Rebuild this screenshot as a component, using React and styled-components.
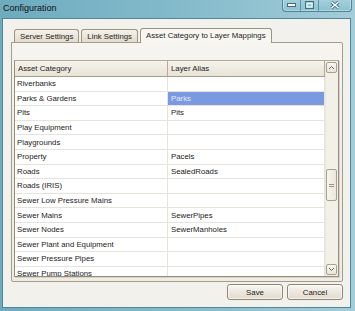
import React from "react";
import styled, { createGlobalStyle } from "styled-components";

const GlobalStyle = createGlobalStyle`
    *, *::before, *::after {
        box-sizing: border-box;
    }
    html, body {
        margin: 0;
        padding: 0;
        background: #7ab3c5;
    }
    body {
        font-family: "Liberation Sans", Arial, sans-serif;
        font-size: 7.8px;
        color: #1b1b1b;
    }
`;

const rows = [
    ["Riverbanks", ""],
    ["Parks & Gardens", "Parks", true],
    ["Pits", "Pits"],
    ["Play Equipment", ""],
    ["Playgrounds", ""],
    ["Property", "Pacels"],
    ["Roads", "SealedRoads"],
    ["Roads (IRIS)", ""],
    ["Sewer Low Pressure Mains", ""],
    ["Sewer Mains", "SewerPipes"],
    ["Sewer Nodes", "SewerManholes"],
    ["Sewer Plant and Equipment", ""],
    ["Sewer Pressure Pipes", ""],
    ["Sewer Pump Stations", ""],
];

const Window = styled.div`
    width: 355px;
    height: 311px;
    display: flex;
    flex-direction: column;
    background: linear-gradient(to right, #6eabbf 0%, #86bccc 55%, #a3cdd8 100%);
    overflow: hidden;
`;

const TitleBar = styled.div`
    height: 18px;
    flex-shrink: 0;
    display: flex;
    align-items: flex-start;
    padding-left: 3px;
`;

const Title = styled.div`
    font-size: 9px;
    line-height: 14px;
    color: #111;
    margin-top: 1px;
`;

const CaptionGroup = styled.div`
    margin-left: auto;
    margin-right: 3px;
    display: flex;
    height: 13px;
    margin-top: -1px;
    border: 1px solid #4f8597;
    border-top: none;
    border-radius: 0 0 4px 4px;
    background: linear-gradient(#a7d0dc, #8cc0cf);
    box-shadow: inset 0 0 0 1px rgba(255, 255, 255, 0.35);
    overflow: hidden;
`;

const CaptionButton = styled.div`
    width: ${p => p.$w}px;
    display: flex;
    align-items: center;
    justify-content: center;
    border-left: ${p => (p.$first ? "none" : "1px solid #5d93a5")};
`;

const Client = styled.div`
    flex: 1;
    margin: 0 4px 3px 2px;
    border: 1px solid #4d8799;
    background: #f3f1ec;
    display: flex;
    flex-direction: column;
    padding: 9px 7px 7px 8px;
`;

const TabStrip = styled.div`
    display: flex;
    align-items: flex-end;
    gap: 2px;
    height: 14px;
    flex-shrink: 0;
    padding-left: 3px;
    position: relative;
    z-index: 1;
`;

const Tab = styled.div`
    height: ${p => (p.$active ? 15 : 13)}px;
    margin-bottom: ${p => (p.$active ? -1 : 0)}px;
    padding: 0 5px ${p => (p.$active ? 1 : 0)}px;
    display: flex;
    align-items: center;
    border: 1px solid #9c9484;
    border-bottom: none;
    border-radius: 3px 3px 0 0;
    background: ${p =>
        p.$active
            ? "#f8f6f1"
            : "linear-gradient(#f4f1ea, #e3dccd)"};
    color: #1e1e1e;
    white-space: nowrap;
`;

const Panel = styled.div`
    height: 240px;
    flex-shrink: 0;
    border: 1px solid #a39b8b;
    border-radius: 0 2px 2px 2px;
    background: linear-gradient(#f7f5f0, #f1eee7 40%, #efece4);
    padding: 17px 3px 4px 2px;
    display: flex;
    flex-direction: column;
`;

const Grid = styled.div`
    flex: 1;
    display: flex;
    border: 1px solid #968c7b;
    border-top-color: #b3aa9a;
    box-shadow: 1px 1px 0 #d8d2c6;
    background: #ffffff;
    overflow: hidden;
`;

const Table = styled.div`
    flex: 1;
    display: flex;
    flex-direction: column;
    overflow: hidden;
`;

const HeaderRow = styled.div`
    height: 16px;
    display: grid;
    grid-template-columns: 153px 1fr;
    background: linear-gradient(#f6f3ec, #e9e3d7);
    border-bottom: 1px solid #a69d8c;
    flex-shrink: 0;
`;

const HeaderCell = styled.div`
    display: flex;
    align-items: center;
    padding-left: 3px;
    border-right: 1px solid #b4ab9a;
    color: #222;
`;

const Row = styled.div`
    height: 14.6px;
    flex-shrink: 0;
    display: grid;
    grid-template-columns: 153px 1fr;
    border-bottom: 1px solid #e6e3dc;
`;

const Cell = styled.div`
    display: flex;
    align-items: center;
    padding-left: ${p => (p.$second ? 3 : 2)}px;
    border-right: 1px solid #e6e3dc;
    background: ${p => (p.$selected ? "#7b99e0" : "transparent")};
    color: ${p => (p.$selected ? "#e4eafb" : "#1b1b1b")};
    white-space: nowrap;
    overflow: hidden;
`;

const ScrollBar = styled.div`
    width: 13px;
    display: flex;
    flex-direction: column;
    background: #f3f0e8;
    border-left: 1px solid #ebe7de;
    padding: 1px 1px 1px 0;
`;

const ScrollButton = styled.div`
    height: 11px;
    flex-shrink: 0;
    display: flex;
    align-items: center;
    justify-content: center;
    border: 1px solid #a89f8f;
    border-radius: 2px;
    background: linear-gradient(#f7f5f0, #e9e4da);
`;

const Track = styled.div`
    flex: 1;
    display: flex;
    flex-direction: column;
`;

const Thumb = styled.div`
    margin-top: ${p => p.$offset}px;
    height: ${p => p.$size}px;
    display: flex;
    align-items: center;
    justify-content: center;
    border: 1px solid #a89f8f;
    border-radius: 2px;
    background: linear-gradient(to right, #f7f5f0, #ebe6dc);
`;

const Grip = styled.div`
    width: 5px;
    height: 3px;
    border-top: 1px solid #9b9282;
    border-bottom: 1px solid #9b9282;
`;

const ButtonRow = styled.div`
    display: flex;
    justify-content: flex-end;
    gap: 4px;
    margin-top: 2px;
`;

const Button = styled.button`
    width: 56px;
    height: 16px;
    padding: 0;
    font: inherit;
    color: #1b1b1b;
    border: 1px solid #8f8676;
    border-radius: 3px;
    background: linear-gradient(#f8f6f1, #ebe6dc 55%, #e2dccf);
    box-shadow: inset 0 0 0 1px rgba(255, 255, 255, 0.6);
`;

const Chevron = ({ down }) => (
    <svg width="7" height="5" viewBox="0 0 7 5">
        <polyline
            points={down ? "1,1 3.5,3.5 6,1" : "1,4 3.5,1.5 6,4"}
            fill="none"
            stroke="#6e6657"
            strokeWidth="1"
        />
    </svg>
);

export default function App() {
    return (
        <>
            <GlobalStyle />
            <Window>
                <TitleBar>
                    <Title>Configuration</Title>
                    <CaptionGroup>
                        <CaptionButton $w={17} $first>
                            <svg width="9" height="4" viewBox="0 0 9 4">
                                <rect x="0.5" y="0.5" width="8" height="3" fill="#fff" stroke="#3f6f80" />
                            </svg>
                        </CaptionButton>
                        <CaptionButton $w={18}>
                            <svg width="9" height="8" viewBox="0 0 9 8">
                                <rect x="0.5" y="0.5" width="8" height="7" fill="none" stroke="#3f6f80" />
                                <rect x="2" y="2.5" width="5" height="3.5" fill="none" stroke="#fff" />
                            </svg>
                        </CaptionButton>
                        <CaptionButton $w={33}>
                            <svg width="10" height="8" viewBox="0 0 10 8">
                                <path d="M1.5 1 L8.5 7 M8.5 1 L1.5 7" stroke="#3f6f80" strokeWidth="3" />
                                <path d="M1.5 1 L8.5 7 M8.5 1 L1.5 7" stroke="#fff" strokeWidth="1.4" />
                            </svg>
                        </CaptionButton>
                    </CaptionGroup>
                </TitleBar>
                <Client>
                    <TabStrip>
                        <Tab>Server Settings</Tab>
                        <Tab>Link Settings</Tab>
                        <Tab $active>Asset Category to Layer Mappings</Tab>
                    </TabStrip>
                    <Panel>
                        <Grid>
                            <Table>
                                <HeaderRow>
                                    <HeaderCell>Asset Category</HeaderCell>
                                    <HeaderCell>Layer Alias</HeaderCell>
                                </HeaderRow>
                                {rows.map(([category, alias, selected]) => (
                                    <Row key={category}>
                                        <Cell>{category}</Cell>
                                        <Cell $second $selected={selected}>{alias}</Cell>
                                    </Row>
                                ))}
                            </Table>
                            <ScrollBar>
                                <ScrollButton><Chevron /></ScrollButton>
                                <Track>
                                    <Thumb $offset={96} $size={32}><Grip /></Thumb>
                                </Track>
                                <ScrollButton><Chevron down /></ScrollButton>
                            </ScrollBar>
                        </Grid>
                    </Panel>
                    <ButtonRow>
                        <Button>Save</Button>
                        <Button>Cancel</Button>
                    </ButtonRow>
                </Client>
            </Window>
        </>
    );
}
